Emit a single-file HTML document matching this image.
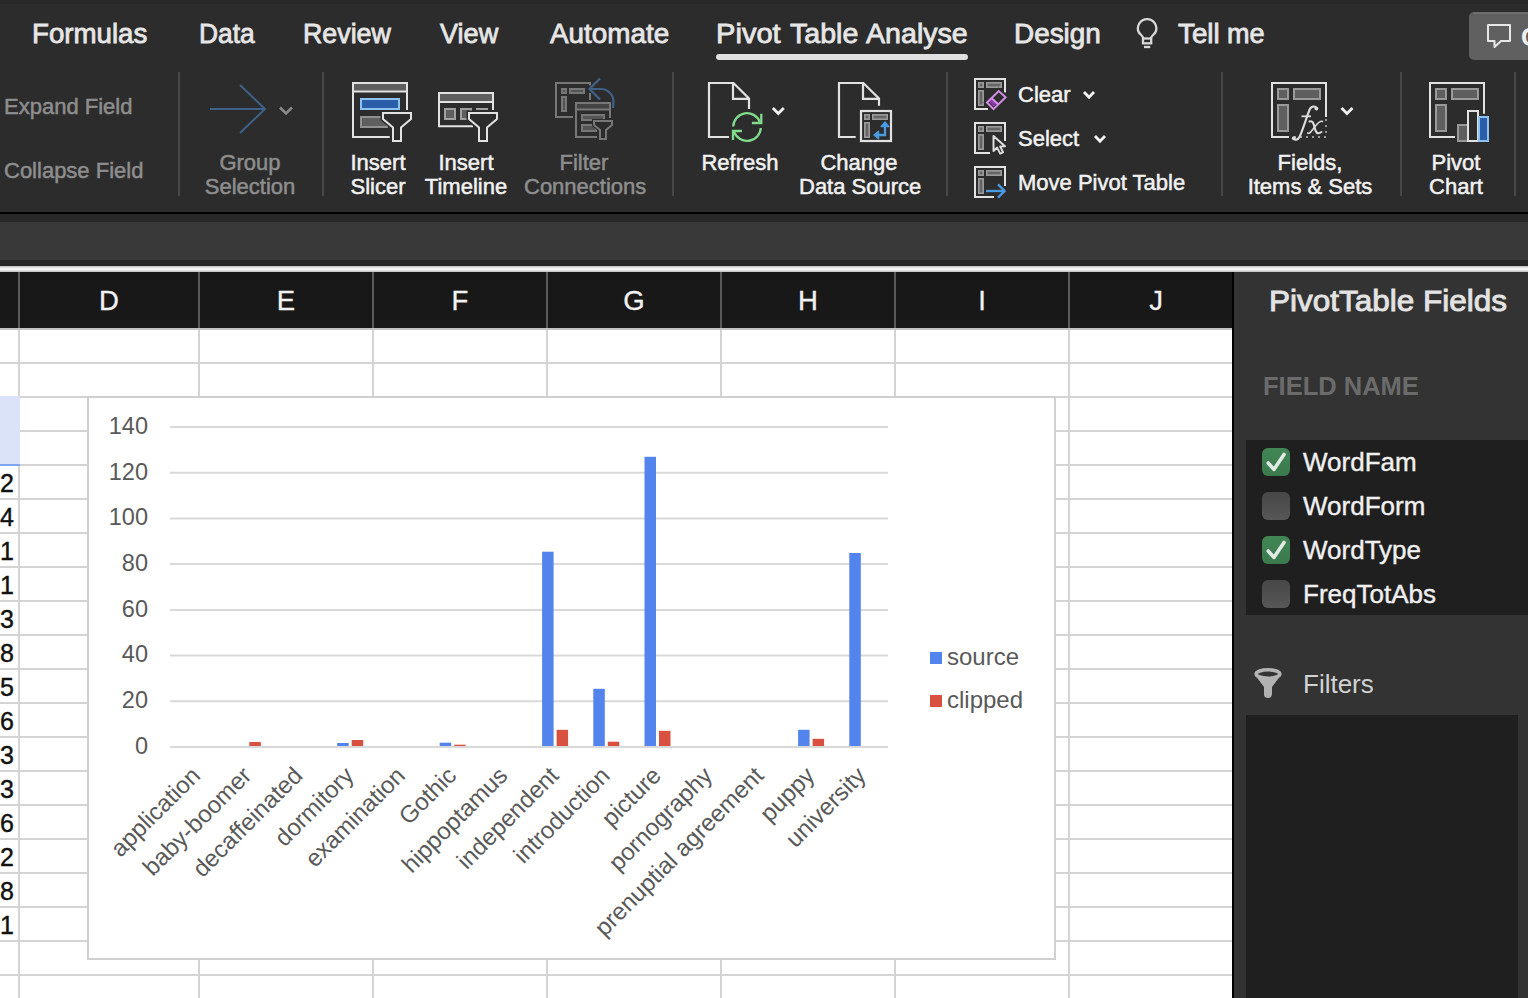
<!DOCTYPE html>
<html><head><meta charset="utf-8">
<style>
*{margin:0;padding:0;box-sizing:border-box}
html,body{width:1528px;height:998px;overflow:hidden;background:#2c2c2c;font-family:"Liberation Sans",sans-serif}
.a{position:absolute}
.t{position:absolute;white-space:nowrap;line-height:1}
.tab{position:absolute;top:3.5px;font-size:27px;font-weight:400;-webkit-text-stroke:0.8px currentColor;color:#e6e6e6;white-space:nowrap;line-height:60px;transform-origin:0 0}
.lbl{position:absolute;font-size:22px;line-height:24px;color:#f2f2f2;text-align:center;white-space:nowrap;-webkit-text-stroke:0.5px currentColor}
.dis{color:#8e8e8e}
.sep{position:absolute;top:72px;width:2px;height:124px;background:#474747}
.ch{position:absolute;top:272.5px;height:56px;color:#f2f2f2;font-size:27.5px;line-height:56px;text-align:center;-webkit-text-stroke:0.3px currentColor}
.vl{position:absolute;width:2px}
.hl{position:absolute;height:2px}
.cb{left:1262px;width:28px;height:28px;border-radius:6px;background:linear-gradient(#474747,#575757)}
.cb.on{background:linear-gradient(#428656,#3a7a4c)}
.fl{left:1303px;font-size:26px;color:#f0f0f0;line-height:30px;-webkit-text-stroke:0.4px currentColor}
.num{position:absolute;font-size:25px;color:#111;line-height:34px;text-align:right;-webkit-text-stroke:0.4px #111}
</style></head>
<body>
<!-- top band -->
<div class="a" style="left:0;top:0;width:1528px;height:4px;background:#282828"></div>

<!-- tabs -->
<div class="tab" style="left:32.3px;transform:scaleX(1.025)">Formulas</div>
<div class="tab" style="left:198.5px;transform:scaleX(0.977)">Data</div>
<div class="tab" style="left:302.5px;transform:scaleX(0.992)">Review</div>
<div class="tab" style="left:439.9px;transform:scaleX(1.003)">View</div>
<div class="tab" style="left:549.8px;transform:scaleX(1.031)">Automate</div>
<div class="tab" style="left:716.0px;transform:scaleX(1.078)">Pivot</div>
<div class="tab" style="left:790.2px;transform:scaleX(1.058)">Table</div>
<div class="tab" style="left:866.2px;transform:scaleX(1.059)">Analyse</div>
<div class="a" style="left:716px;top:54px;width:252px;height:6px;border-radius:3px;background:#e0e0e0"></div>
<div class="tab" style="left:1014.4px;transform:scaleX(1.033)">Design</div>
<div class="tab" style="left:1177.8px;transform:scaleX(1.028)">Tell</div>
<div class="tab" style="left:1226.7px;transform:scaleX(1.003)">me</div>
<div class="a" style="left:1469px;top:13px;width:80px;height:47px;border-radius:8px;background:#4e4e4e"></div>

<!-- separators -->
<div class="sep" style="left:178px"></div>
<div class="sep" style="left:322px"></div>
<div class="sep" style="left:672px"></div>
<div class="sep" style="left:946px"></div>
<div class="sep" style="left:1221px"></div>
<div class="sep" style="left:1400px"></div>
<div class="sep" style="left:1514px"></div>

<!-- ribbon labels -->
<div class="lbl dis" style="left:4px;top:95px;text-align:left">Expand Field</div>
<div class="lbl dis" style="left:4px;top:159px;text-align:left">Collapse Field</div>
<div class="lbl dis" style="left:200px;top:151px;width:100px">Group<br>Selection</div>
<div class="lbl" style="left:328px;top:151px;width:100px">Insert<br>Slicer</div>
<div class="lbl" style="left:416px;top:151px;width:100px">Insert<br>Timeline</div>
<div class="lbl dis" style="left:524px;top:151px;width:120px">Filter<br>Connections</div>
<div class="lbl" style="left:690px;top:151px;width:100px">Refresh</div>
<div class="lbl" style="left:799px;top:151px;width:120px">Change<br>Data Source</div>
<div class="lbl" style="left:1018px;top:83px;text-align:left">Clear</div>
<div class="lbl" style="left:1018px;top:127px;text-align:left">Select</div>
<div class="lbl" style="left:1018px;top:171px;text-align:left">Move Pivot Table</div>
<div class="lbl" style="left:1240px;top:151px;width:140px">Fields,<br>Items &amp; Sets</div>
<div class="lbl" style="left:1406px;top:151px;width:100px">Pivot<br>Chart</div>

<!-- ribbon bottom -->
<div class="a" style="left:0;top:212px;width:1528px;height:2px;background:#000"></div>
<div class="a" style="left:0;top:214px;width:1528px;height:8px;background:#282828"></div>
<div class="a" style="left:0;top:222px;width:1528px;height:38px;background:#393939"></div>
<div class="a" style="left:0;top:260px;width:1528px;height:6px;background:#262626"></div>
<div class="a" style="left:0;top:266px;width:1528px;height:6px;background:linear-gradient(#bdbdbd,#f4f4f4 40%,#f4f4f4 60%,#bdbdbd)"></div>

<!-- grid area -->
<div class="a" style="left:0;top:272px;width:1232px;height:56px;background:#181818"></div>
<div class="a" style="left:0;top:328px;width:1232px;height:670px;background:#fff"></div>
<div class="vl" style="left:18px;top:272px;height:56px;background:#5a5a5a"></div>
<div class="vl" style="left:198px;top:272px;height:56px;background:#5a5a5a"></div>
<div class="vl" style="left:372px;top:272px;height:56px;background:#5a5a5a"></div>
<div class="vl" style="left:546px;top:272px;height:56px;background:#5a5a5a"></div>
<div class="vl" style="left:720px;top:272px;height:56px;background:#5a5a5a"></div>
<div class="vl" style="left:894px;top:272px;height:56px;background:#5a5a5a"></div>
<div class="vl" style="left:1068px;top:272px;height:56px;background:#5a5a5a"></div>
<div class="ch" style="left:69px;width:80px">D</div>
<div class="ch" style="left:246px;width:80px">E</div>
<div class="ch" style="left:420px;width:80px">F</div>
<div class="ch" style="left:594px;width:80px">G</div>
<div class="ch" style="left:768px;width:80px">H</div>
<div class="ch" style="left:942px;width:80px">I</div>
<div class="ch" style="left:1116px;width:80px">J</div>
<div class="hl" style="left:0;top:328px;width:1232px;background:#c3c3c3"></div>
<div class="vl" style="left:18px;top:330px;height:668px;background:#d4d4d4"></div>
<div class="vl" style="left:198px;top:330px;height:668px;background:#d4d4d4"></div>
<div class="vl" style="left:372px;top:330px;height:668px;background:#d4d4d4"></div>
<div class="vl" style="left:546px;top:330px;height:668px;background:#d4d4d4"></div>
<div class="vl" style="left:720px;top:330px;height:668px;background:#d4d4d4"></div>
<div class="vl" style="left:894px;top:330px;height:668px;background:#d4d4d4"></div>
<div class="vl" style="left:1068px;top:330px;height:668px;background:#d4d4d4"></div>
<div class="hl" style="left:0;top:362px;width:1232px;background:#d4d4d4"></div>
<div class="hl" style="left:0;top:396px;width:1232px;background:#d4d4d4"></div>
<div class="hl" style="left:0;top:430px;width:1232px;background:#d4d4d4"></div>
<div class="hl" style="left:0;top:464px;width:1232px;background:#d4d4d4"></div>
<div class="hl" style="left:0;top:498px;width:1232px;background:#d4d4d4"></div>
<div class="hl" style="left:0;top:532px;width:1232px;background:#d4d4d4"></div>
<div class="hl" style="left:0;top:566px;width:1232px;background:#d4d4d4"></div>
<div class="hl" style="left:0;top:600px;width:1232px;background:#d4d4d4"></div>
<div class="hl" style="left:0;top:634px;width:1232px;background:#d4d4d4"></div>
<div class="hl" style="left:0;top:668px;width:1232px;background:#d4d4d4"></div>
<div class="hl" style="left:0;top:702px;width:1232px;background:#d4d4d4"></div>
<div class="hl" style="left:0;top:736px;width:1232px;background:#d4d4d4"></div>
<div class="hl" style="left:0;top:770px;width:1232px;background:#d4d4d4"></div>
<div class="hl" style="left:0;top:804px;width:1232px;background:#d4d4d4"></div>
<div class="hl" style="left:0;top:838px;width:1232px;background:#d4d4d4"></div>
<div class="hl" style="left:0;top:872px;width:1232px;background:#d4d4d4"></div>
<div class="hl" style="left:0;top:906px;width:1232px;background:#d4d4d4"></div>
<div class="hl" style="left:0;top:940px;width:1232px;background:#d4d4d4"></div>
<div class="hl" style="left:0;top:974px;width:1232px;background:#d4d4d4"></div>

<div class="a" style="left:0;top:396px;width:20px;height:68px;background:#dae3f7"></div>
<div class="a" style="left:0;top:464px;width:20px;height:2px;background:#7fa6ef"></div>
<div class="num" style="top:466px;left:-60px;width:74px">2</div>
<div class="num" style="top:500px;left:-60px;width:74px">4</div>
<div class="num" style="top:534px;left:-60px;width:74px">1</div>
<div class="num" style="top:568px;left:-60px;width:74px">1</div>
<div class="num" style="top:602px;left:-60px;width:74px">3</div>
<div class="num" style="top:636px;left:-60px;width:74px">8</div>
<div class="num" style="top:670px;left:-60px;width:74px">5</div>
<div class="num" style="top:704px;left:-60px;width:74px">6</div>
<div class="num" style="top:738px;left:-60px;width:74px">3</div>
<div class="num" style="top:772px;left:-60px;width:74px">3</div>
<div class="num" style="top:806px;left:-60px;width:74px">6</div>
<div class="num" style="top:840px;left:-60px;width:74px">2</div>
<div class="num" style="top:874px;left:-60px;width:74px">8</div>
<div class="num" style="top:908px;left:-60px;width:74px">1</div>
<svg class="a" style="left:0;top:0" width="1528" height="998">
<rect x="88" y="397" width="967" height="562" fill="#fff" stroke="#d0d0d0" stroke-width="2"/>
<line x1="170" x2="888" y1="747.0" y2="747.0" stroke="#d9d9d9" stroke-width="2"/>
<text x="148" y="753.8" text-anchor="end" font-size="23.5" fill="#595959">0</text>
<line x1="170" x2="888" y1="701.3" y2="701.3" stroke="#d9d9d9" stroke-width="2"/>
<text x="148" y="708.1" text-anchor="end" font-size="23.5" fill="#595959">20</text>
<line x1="170" x2="888" y1="655.6" y2="655.6" stroke="#d9d9d9" stroke-width="2"/>
<text x="148" y="662.4" text-anchor="end" font-size="23.5" fill="#595959">40</text>
<line x1="170" x2="888" y1="609.9" y2="609.9" stroke="#d9d9d9" stroke-width="2"/>
<text x="148" y="616.7" text-anchor="end" font-size="23.5" fill="#595959">60</text>
<line x1="170" x2="888" y1="564.1" y2="564.1" stroke="#d9d9d9" stroke-width="2"/>
<text x="148" y="570.9" text-anchor="end" font-size="23.5" fill="#595959">80</text>
<line x1="170" x2="888" y1="518.4" y2="518.4" stroke="#d9d9d9" stroke-width="2"/>
<text x="148" y="525.2" text-anchor="end" font-size="23.5" fill="#595959">100</text>
<line x1="170" x2="888" y1="472.7" y2="472.7" stroke="#d9d9d9" stroke-width="2"/>
<text x="148" y="479.5" text-anchor="end" font-size="23.5" fill="#595959">120</text>
<line x1="170" x2="888" y1="427.0" y2="427.0" stroke="#d9d9d9" stroke-width="2"/>
<text x="148" y="433.8" text-anchor="end" font-size="23.5" fill="#595959">140</text>
<text x="201.6" y="777" text-anchor="end" font-size="24" fill="#595959" transform="rotate(-45 201.6 777)">application</text>
<rect x="249.3" y="742" width="11.5" height="4.0" fill="#d85140"/>
<text x="252.8" y="777" text-anchor="end" font-size="24" fill="#595959" transform="rotate(-45 252.8 777)">baby-boomer</text>
<text x="304.0" y="777" text-anchor="end" font-size="24" fill="#595959" transform="rotate(-45 304.0 777)">decaffeinated</text>
<rect x="337.2" y="743" width="11.5" height="3.0" fill="#5383ec"/>
<rect x="351.7" y="740" width="11.5" height="6.0" fill="#d85140"/>
<text x="355.2" y="777" text-anchor="end" font-size="24" fill="#595959" transform="rotate(-45 355.2 777)">dormitory</text>
<text x="406.4" y="777" text-anchor="end" font-size="24" fill="#595959" transform="rotate(-45 406.4 777)">examination</text>
<rect x="439.7" y="742.7" width="11.5" height="3.3" fill="#5383ec"/>
<rect x="454.2" y="744.7" width="11.5" height="1.3" fill="#d85140"/>
<text x="457.7" y="777" text-anchor="end" font-size="24" fill="#595959" transform="rotate(-45 457.7 777)">Gothic</text>
<text x="508.9" y="777" text-anchor="end" font-size="24" fill="#595959" transform="rotate(-45 508.9 777)">hippoptamus</text>
<rect x="542.1" y="551.7" width="11.5" height="194.3" fill="#5383ec"/>
<rect x="556.6" y="729.8" width="11.5" height="16.2" fill="#d85140"/>
<text x="560.1" y="777" text-anchor="end" font-size="24" fill="#595959" transform="rotate(-45 560.1 777)">independent</text>
<rect x="593.3" y="688.8" width="11.5" height="57.2" fill="#5383ec"/>
<rect x="607.8" y="741.7" width="11.5" height="4.3" fill="#d85140"/>
<text x="611.3" y="777" text-anchor="end" font-size="24" fill="#595959" transform="rotate(-45 611.3 777)">introduction</text>
<rect x="644.5" y="456.8" width="11.5" height="289.2" fill="#5383ec"/>
<rect x="659.0" y="730.8" width="11.5" height="15.2" fill="#d85140"/>
<text x="662.5" y="777" text-anchor="end" font-size="24" fill="#595959" transform="rotate(-45 662.5 777)">picture</text>
<text x="713.7" y="777" text-anchor="end" font-size="24" fill="#595959" transform="rotate(-45 713.7 777)">pornography</text>
<text x="764.9" y="777" text-anchor="end" font-size="24" fill="#595959" transform="rotate(-45 764.9 777)">prenuptial agreement</text>
<rect x="798.1" y="729.8" width="11.5" height="16.2" fill="#5383ec"/>
<rect x="812.6" y="738.8" width="11.5" height="7.2" fill="#d85140"/>
<text x="816.1" y="777" text-anchor="end" font-size="24" fill="#595959" transform="rotate(-45 816.1 777)">puppy</text>
<rect x="849.3" y="553" width="11.5" height="193.0" fill="#5383ec"/>
<text x="867.3" y="777" text-anchor="end" font-size="24" fill="#595959" transform="rotate(-45 867.3 777)">university</text>
<rect x="930" y="652" width="12" height="12" fill="#5383ec"/>
<text x="947" y="665" font-size="24" fill="#595959">source</text>
<rect x="930" y="695" width="12" height="12" fill="#d85140"/>
<text x="947" y="708" font-size="24" fill="#595959">clipped</text>
</svg>


<!-- panel -->
<div class="a" style="left:1232px;top:272px;width:2px;height:726px;background:#000"></div>
<div class="a" style="left:1234px;top:272px;width:294px;height:726px;background:#333"></div>

<div class="t" style="left:1268.5px;top:271px;font-size:30px;font-weight:400;-webkit-text-stroke:0.9px currentColor;color:#e3e3e3;line-height:60px;transform:scaleX(1.05);transform-origin:0 0">PivotTable Fields</div>
<div class="t" style="left:1263px;top:371px;font-size:25.5px;font-weight:700;color:#6b6b6b;line-height:30px">FIELD NAME</div>
<div class="a" style="left:1246px;top:440px;width:282px;height:175px;background:#1f1f1f"></div>
<div class="a cb on" style="top:448px"></div>
<div class="a cb" style="top:492px"></div>
<div class="a cb on" style="top:536px"></div>
<div class="a cb" style="top:580px"></div>
<svg class="a" style="left:1262px;top:448px" width="28" height="28" viewBox="0 0 28 28"><path d="M6.2 15 L11.9 21.4 L22 6.5" fill="none" stroke="#e3eae3" stroke-width="3.6" stroke-linecap="round" stroke-linejoin="round"/></svg>
<svg class="a" style="left:1262px;top:536px" width="28" height="28" viewBox="0 0 28 28"><path d="M6.2 15 L11.9 21.4 L22 6.5" fill="none" stroke="#e3eae3" stroke-width="3.6" stroke-linecap="round" stroke-linejoin="round"/></svg>
<div class="t fl" style="top:447px">WordFam</div>
<div class="t fl" style="top:491px">WordForm</div>
<div class="t fl" style="top:535px">WordType</div>
<div class="t fl" style="top:579px">FreqTotAbs</div>
<svg class="a" style="left:1250px;top:662px" width="36" height="40" viewBox="0 0 36 40">
<path d="M6.5 15 Q18 19.5 29.5 15 L22 25 V32 A4 4 0 0 1 14 32 V25 Z" fill="#b2b2b2"/>
<ellipse cx="18" cy="12" rx="11.8" ry="4.2" fill="none" stroke="#b2b2b2" stroke-width="3.6"/>
</svg>
<div class="t" style="left:1303px;top:669px;font-size:26px;color:#d2d2d2;line-height:30px">Filters</div>
<div class="a" style="left:1246px;top:715px;width:272px;height:283px;background:#1f1f1f"></div>

<svg class="a" style="left:0;top:0" width="1528" height="212" fill="none" stroke-linecap="butt">
<!-- lightbulb -->
<g stroke="#d8d8d8" stroke-width="2.3">
<path d="M1143.4 38.5 C1142.8 35.8 1140.4 34.6 1138.9 32.5 A9.2 9.2 0 1 1 1155.3 32.5 C1153.8 34.6 1151.4 35.8 1150.8 38.5"/>
<rect x="1143" y="38.5" width="8.2" height="4.8"/>
<line x1="1144" y1="47" x2="1150.2" y2="47"/>
</g>
<!-- comment button -->
<rect x="1469" y="12" width="80" height="48" rx="5" fill="#606060" stroke="none"/><rect x="1473" y="12.5" width="60" height="1.2" fill="#777" stroke="none"/>
<path d="M1488 25 H1510 V41 H1501 L1494.5 47 V41 H1488 Z" stroke="#e8e8e8" stroke-width="2" stroke-linejoin="round"/>
<text x="1521" y="46" font-size="26" font-weight="700" fill="#f0f0f0" stroke="none">C</text>

<!-- Group Selection -->
<g stroke="#3f6188" stroke-width="2">
<line x1="210" y1="109" x2="265" y2="109"/>
<polyline points="240,85 265,109 240,133"/>
</g>
<polyline points="280,107.5 286,113.5 292,107.5" stroke="#8a8a8a" stroke-width="2.6"/>

<!-- Insert Slicer -->
<g>
<rect x="354" y="84" width="52" height="7" fill="#5f5f5f"/>
<path d="M389.7 137 H353 V83 H407 V110 M354 91.5 H406" stroke="#e2e2e2" stroke-width="2"/>
<rect x="361" y="99" width="38" height="10" fill="#2a5ea8" stroke="#8ec0f0" stroke-width="2"/>
<rect x="361" y="117" width="26" height="10" fill="#5f5f5f" stroke="#909090" stroke-width="2"/>
<path d="M383 113 H411 V119 L401 127.5 V141 H393 V127.5 L383 119 Z" fill="#2c2c2c" stroke="#2c2c2c" stroke-width="5" stroke-linejoin="miter"/>
<path d="M383 113 H411 V119 L401 127.5 V141 H393 V127.5 L383 119 Z" fill="#2c2c2c" stroke="#e2e2e2" stroke-width="2"/>
</g>

<!-- Insert Timeline -->
<g>
<rect x="440" y="94" width="52" height="7" fill="#5f5f5f"/>
<path d="M473 126.3 H439 V93 H493 V110 M440 102 H492" stroke="#e2e2e2" stroke-width="2"/>
<rect x="445" y="109" width="10" height="10" fill="#5f5f5f" stroke="#a0a0a0" stroke-width="2"/>
<rect x="461" y="109" width="10" height="10" fill="#5f5f5f" stroke="#a0a0a0" stroke-width="2"/>
<rect x="476" y="108" width="12" height="2" fill="#a0a0a0"/>
<path d="M469 113 H497 V119 L487 127.5 V141 H479 V127.5 L469 119 Z" fill="#2c2c2c" stroke="#2c2c2c" stroke-width="5"/>
<path d="M469 113 H497 V119 L487 127.5 V141 H479 V127.5 L469 119 Z" fill="#2c2c2c" stroke="#e2e2e2" stroke-width="2"/>
</g>

<!-- Filter Connections (disabled) -->
<g stroke="#777" stroke-width="2">
<path d="M573 117 H556 V83 H590 V85.5 M590 93 V100"/>
<rect x="562" y="89" width="4" height="4" fill="#555"/>
<rect x="570" y="89" width="14" height="4" fill="#555"/>
<rect x="562" y="97" width="4" height="14" fill="#555"/>
<rect x="577" y="104" width="32" height="5" fill="#444" stroke="none"/>
<path d="M597 137 H576 V103 H610 V118 M577 109.5 H609"/>
<rect x="582" y="115" width="22" height="5" fill="#555"/>
<rect x="582" y="125" width="14" height="6" fill="#555"/>
<path d="M594 121 H612 V125 L606 130 V139 H600 V130 L594 125 Z" fill="#2c2c2c" stroke="#2c2c2c" stroke-width="4"/>
<path d="M594 121 H612 V125 L606 130 V139 H600 V130 L594 125 Z" fill="#2c2c2c"/>
</g>
<g stroke="#3f6188" stroke-width="2.2">
<polyline points="600,78.5 589.5,89 600,99.5"/>
<path d="M590 89 H601 A12.5 12.5 0 0 1 613.5 101.5 L613 108"/>
</g>

<!-- Refresh -->
<path d="M729 137 H709 V83 H733.5 L749 98.5 V109 M733 83 V98.8 H749" stroke="#e2e2e2" stroke-width="2.2"/>
<g stroke="#80dc8b" stroke-width="2.3">
<path d="M733.2 126.5 A13.8 13.8 0 0 1 759.8 121.8"/>
<polyline points="761.3,113.7 761.3,123 751.9,123"/>
<path d="M760.8 128 A13.8 13.8 0 0 1 734.2 132.2"/>
<polyline points="741.9,131 733,131 733,140"/>
</g>
<polyline points="772.8,108 778.3,113.5 783.8,108" stroke="#f0f0f0" stroke-width="2.8"/>

<!-- Change Data Source -->
<path d="M855.7 137 H839 V83 H863.3 L879 98.5 V105.7 M863 83 V98.8 H879" stroke="#e2e2e2" stroke-width="2.2"/>
<rect x="861" y="111" width="30" height="30" fill="#2c2c2c" stroke="#e2e2e2" stroke-width="2.2"/>
<g stroke="#999" stroke-width="1.6" fill="#666">
<rect x="864.8" y="114.8" width="4.4" height="4.4"/>
<rect x="872.8" y="114.8" width="14.4" height="4.4"/>
<rect x="864.8" y="122.8" width="4.4" height="14.4"/>
</g>
<polyline points="877,135 885,135 885,125" stroke="#4a9ae0" stroke-width="2.3"/>
<path d="M881.2 126.5 L885 122 L888.8 126.5 Z M878.5 131.3 L874 135 L878.5 138.7 Z" fill="#4a9ae0" stroke="#4a9ae0" stroke-width="1.4" stroke-linejoin="round"/>

<!-- Clear -->
<g>
<path d="M988 109 H975 V79 H1005 V92.4" stroke="#e2e2e2" stroke-width="2"/>
<g stroke="#999" stroke-width="1.6" fill="#666">
<rect x="978.8" y="82.8" width="4.4" height="4.4"/>
<rect x="986.8" y="82.8" width="14.4" height="4.4"/>
<rect x="978.8" y="90.8" width="4.4" height="14.4"/>
</g>
<path d="M987 102.5 L998.7 91 L1005.6 97.2 L993.5 109.2 Z" fill="#2c2c2c" stroke="#2c2c2c" stroke-width="5"/>
<path d="M988.5 101 L992 97.6 L997.2 103.2 L993.5 106.7 Z" fill="#8a3aa8"/>
<path d="M987 102.5 L998.7 91 L1005.6 97.2 L993.5 109.2 Z M991.5 98 L997.8 104" stroke="#d38ee6" stroke-width="2"/>
</g>

<!-- Select -->
<g>
<path d="M990 153 H975 V123 H1005 V141" stroke="#e2e2e2" stroke-width="2"/>
<g stroke="#999" stroke-width="1.6" fill="#666">
<rect x="978.8" y="126.8" width="4.4" height="4.4"/>
<rect x="986.8" y="126.8" width="14.4" height="4.4"/>
<rect x="978.8" y="134.8" width="4.4" height="14.4"/>
</g>
<path d="M993.5 136 V151 L997.2 147.6 L1000.2 153.6 L1003 152.3 L1000.2 146.4 L1005 146.2 Z" fill="#2c2c2c" stroke="#2c2c2c" stroke-width="2.5" stroke-linejoin="round"/>
<path d="M993.5 136 V151 L997.2 147.6 L1000.2 153.6 L1003 152.3 L1000.2 146.4 L1005 146.2 Z" fill="#2c2c2c" stroke="#dcdcdc" stroke-width="2" stroke-linejoin="round"/>
</g>

<!-- Move Pivot Table -->
<g>
<path d="M994 197 H975 V167 H1005 V186" stroke="#e2e2e2" stroke-width="2"/>
<g stroke="#999" stroke-width="1.6" fill="#666">
<rect x="978.8" y="170.8" width="4.4" height="4.4"/>
<rect x="986.8" y="170.8" width="14.4" height="4.4"/>
<rect x="978.8" y="178.8" width="4.4" height="14.4"/>
</g>
<g stroke="#4a9ae0" stroke-width="2.3">
<line x1="986" y1="191" x2="1005" y2="191"/>
<polyline points="998,184.4 1004.6,191 998,197.6"/>
</g>
</g>

<polyline points="1084,92 1089,97.2 1094,92" stroke="#f4f4f4" stroke-width="2.8"/>
<polyline points="1095,136 1100,141.2 1105,136" stroke="#f4f4f4" stroke-width="2.8"/>
<!-- Fields, Items & Sets -->
<g>
<path d="M1289 137 H1272 V83 H1326 V117" stroke="#e2e2e2" stroke-width="2"/>
<path d="M1326 119 V137 H1290" stroke="#999" stroke-width="2" stroke-dasharray="2 4"/>
<g stroke="#999" stroke-width="2" fill="#5f5f5f">
<rect x="1278" y="89" width="10" height="10"/>
<rect x="1294" y="89" width="26" height="10"/>
<rect x="1278" y="105" width="10" height="26"/>
</g>
<path d="M1300 117 L1312 114" stroke="#2c2c2c" stroke-width="0"/>
<path d="M1316.8 108.8 C1316 105.8 1311.5 105.5 1309.6 109.5 C1307 116 1302.6 130.5 1299.6 136.8 C1297.9 140.3 1294.3 140.6 1293.2 138.3" stroke="#dcdcdc" stroke-width="2.1" stroke-linecap="round"/>
<circle cx="1316.4" cy="108.6" r="1.9" fill="#dcdcdc" stroke="none"/>
<circle cx="1293.8" cy="138.2" r="1.9" fill="#dcdcdc" stroke="none"/>
<path d="M1301.5 116.3 H1311" stroke="#dcdcdc" stroke-width="1.8"/>
<path d="M1309.5 121.5 C1312.5 120.3 1313.6 123 1314.6 127.5 C1315.6 132 1317 135.2 1321.5 132" stroke="#dcdcdc" stroke-width="2.1" stroke-linecap="round"/>
<path d="M1322.5 121.5 C1320.5 120.6 1318.8 122 1315.5 126 L1311.5 131 C1310 133 1308.5 134 1307.8 133" stroke="#dcdcdc" stroke-width="1.6" stroke-linecap="round"/>
</g>
<polyline points="1341.5,108 1347,113.5 1352.5,108" stroke="#f0f0f0" stroke-width="2.8"/>

<!-- Pivot Chart -->
<g>
<path d="M1455 137 H1430 V83 H1484 V113.7" stroke="#e2e2e2" stroke-width="2"/>
<g stroke="#999" stroke-width="2" fill="#5f5f5f">
<rect x="1436" y="89" width="10" height="10"/>
<rect x="1452" y="89" width="26" height="10"/>
<rect x="1436" y="105" width="10" height="26"/>
<rect x="1458" y="125" width="10" height="16"/>
</g>
<rect x="1468" y="111" width="10" height="30" fill="#2c2c2c" stroke="#e2e2e2" stroke-width="2"/>
<rect x="1479" y="117" width="9" height="24" fill="#2a5ea8" stroke="#8ec0f0" stroke-width="2"/>
</g>
</svg>

</body></html>
